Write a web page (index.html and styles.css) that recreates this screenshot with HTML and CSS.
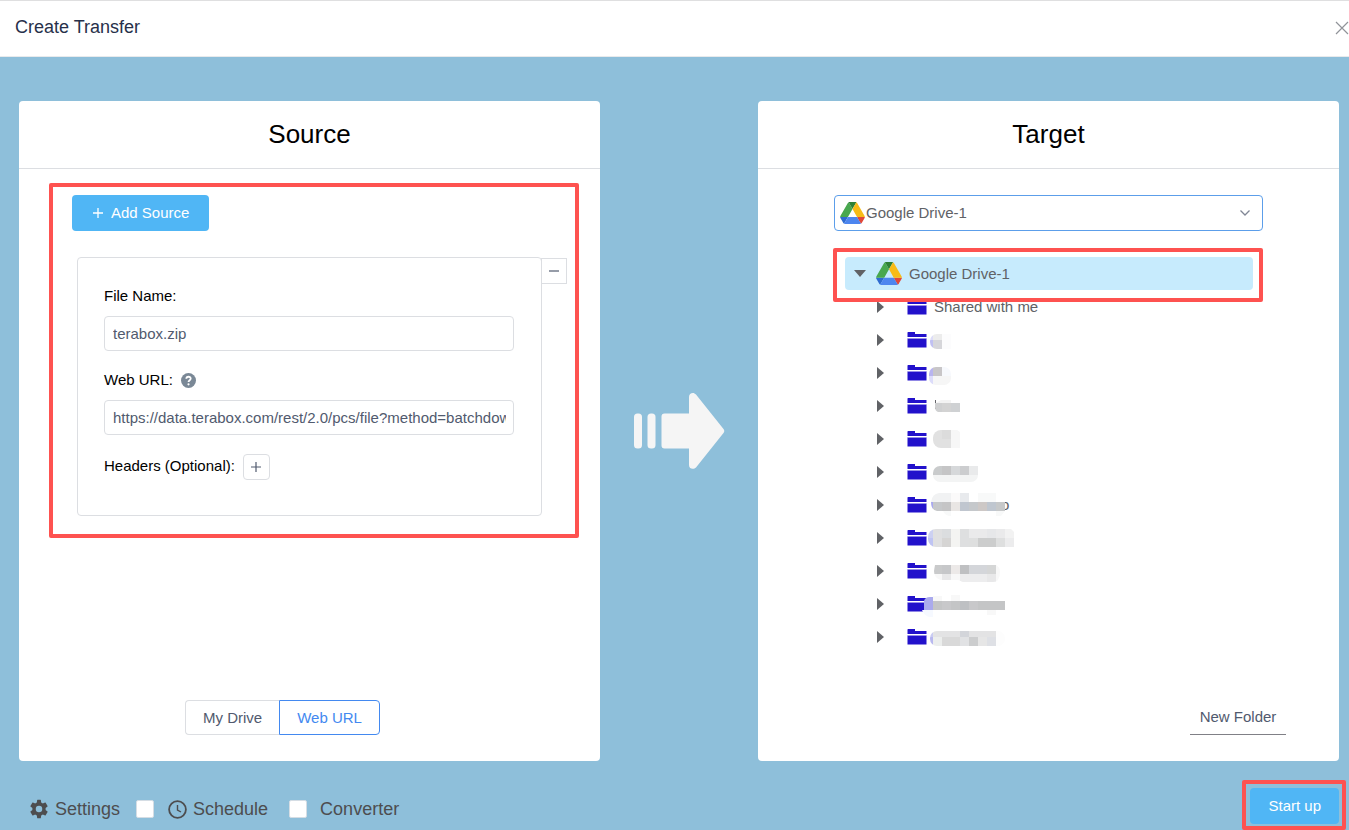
FILE: index.html
```html
<!DOCTYPE html>
<html lang="en">
<head>
<meta charset="utf-8">
<meta name="viewport" content="width=device-width, initial-scale=1">
<title>Create Transfer</title>
<link rel="stylesheet" href="styles.css">
</head>
<body>
<svg class="symbols" aria-hidden="true">
  <symbol id="drive" viewBox="0 0 87.3 78">
    <path fill="#2f6bd0" d="m6.6 66.85 3.85 6.65c.8 1.4 1.95 2.5 3.3 3.3l13.75-23.8h-27.5c0 1.55.4 3.1 1.2 4.5z"/>
    <path fill="#48a84f" d="m43.65 25-13.75-23.8c-1.35.8-2.5 1.9-3.3 3.3l-25.4 44a9.06 9.06 0 0 0-1.2 4.5h27.5z"/>
    <path fill="#e0483a" d="m73.55 76.8c1.35-.8 2.5-1.9 3.3-3.3l1.6-2.75 7.65-13.25c.8-1.4 1.2-2.95 1.2-4.5h-27.5l5.85 11.5z"/>
    <path fill="#2e8035" d="m43.65 25 13.75-23.8c-1.35-.8-2.9-1.2-4.5-1.2h-18.5c-1.6 0-3.15.45-4.5 1.2z"/>
    <path fill="#4d86ef" d="m59.8 53h-32.3l-13.75 23.8c1.35.8 2.9 1.2 4.5 1.2h50.8c1.6 0 3.15-.45 4.5-1.2z"/>
    <path fill="#f7bb18" d="m73.4 26.5-12.7-22c-.8-1.4-1.95-2.5-3.3-3.3l-13.75 23.8 16.15 28h27.45c0-1.55-.4-3.1-1.2-4.5z"/>
  </symbol>
  <symbol id="folder" viewBox="0 0 20 16">
    <path fill="#2211cb" d="M1 0H8V2H19.500V5H.5V.5zM.5 6.500H19.500V15.500H.5z"/>
    <path fill="#9c94ea" d="M.5 6h19v.6H.5z"/>
  </symbol>
  <symbol id="caret" viewBox="0 0 7 12"><path fill="#606266" d="M0 0 7 6 0 12z"/></symbol>
</svg>

<header class="header">
  <h1 class="header-title">Create Transfer</h1>
  <button class="close" aria-label="Close"><svg width="14" height="14" viewBox="0 0 14 14"><path d="M1 1 13 13M13 1 1 13" stroke="#909399" stroke-width="1.200" fill="none"/></svg></button>
</header>

<main class="main">
  <section class="panel">
    <h2 class="panel-title">Source</h2>
    <div class="marked">
      <button class="primary add"><svg width="10" height="10" viewBox="0 0 10 10"><path d="M5 0V10M0 5H10" stroke="#fff" stroke-width="1.300"/></svg>Add Source</button>
      <div class="card-row">
        <form class="card">
          <label class="label" for="file">File Name:</label>
          <input class="field" id="file" type="text" value="terabox.zip">
          <div class="label-row">
            <label class="label" for="url">Web URL:</label>
            <svg width="15" height="15" viewBox="0 0 15 15"><circle cx="7.500" cy="7.500" r="7.500" fill="#7a8896"/><path d="M5.300 5.800C5.400 3 9.800 3.100 9.700 5.700 9.600 7.200 7.600 7.200 7.500 9" fill="none" stroke="#fff" stroke-width="1.800"/><circle cx="7.500" cy="11.300" r="1.100" fill="#fff"/></svg>
          </div>
          <input class="field" id="url" type="text" value="https://data.terabox.com/rest/2.0/pcs/file?method=batchdownload">
          <div class="headers">
            <span>Headers (Optional):</span>
            <button class="small" type="button" aria-label="Add header"><svg width="10" height="10" viewBox="0 0 10 10"><path d="M5 0V10M0 5H10" stroke="#515a6e" stroke-width="1.200"/></svg></button>
          </div>
        </form>
        <button class="small remove" aria-label="Remove source"><svg width="10" height="10" viewBox="0 0 10 10"><path d="M0 5H10" stroke="#515a6e" stroke-width="1.200"/></svg></button>
      </div>
    </div>
    <div class="tabs">
      <button class="tab">My Drive</button>
      <button class="tab tab-active">Web URL</button>
    </div>
  </section>

  <div class="arrow">
    <svg width="92" height="78" viewBox="0 0 92 78" fill="#f5f5f5"><rect x="1" y="21.500" width="8" height="35" rx="3.500"/><rect x="14.500" y="21.500" width="8" height="35" rx="3.500"/><path d="M31.500 21.500H56V5C56 1 60.500-.5 63 2.500L90.500 37Q92 39 90.500 41L63 75.500C60.500 78 56 77 56 73V56.500H31.500Q28.500 56.500 28.500 53.500V24.500Q28.500 21.500 31.500 21.500z"/></svg>
  </div>

  <section class="panel">
    <h2 class="panel-title">Target</h2>
    <div class="target">
      <div class="select-box">
        <svg class="select-icon" width="25" height="22"><use href="#drive"/></svg>
        <select class="select" aria-label="Target drive"><option>Google Drive-1</option></select>
        <svg class="chevron" width="10" height="6" viewBox="0 0 10 6"><path d="M.5.5 5 5 9.500.5" fill="none" stroke="#808695" stroke-width="1.300"/></svg>
      </div>
      <div class="tree-root">
        <svg width="12" height="7" viewBox="0 0 12 7"><path fill="#606266" d="M0 0H12L6 7z"/></svg>
        <svg class="root-icon" width="26" height="23"><use href="#drive"/></svg>
        <span>Google Drive-1</span>
        <div class="root-mark"></div>
      </div>
      <ul class="tree">
        <li class="node"><svg class="caret"><use href="#caret"/></svg><svg class="folder"><use href="#folder"/></svg><span>Shared with me</span></li>
        <li class="node"><svg class="caret"><use href="#caret"/></svg><svg class="folder"><use href="#folder"/></svg>
          <svg class="mask" viewBox="0 0 100 33"><clipPath id="m1"><rect x="9" y="11" width="21" height="15" rx="7"/><path d="M18 11H30V26H18z"/></clipPath><g clip-path="url(#m1)"><path fill="#dcdcf8" d="M3 11h9v6H3z"/><path fill="#c0c0f2" d="M3 17h9v9H3z"/><path fill="#ececec" d="M12 11h9v6h-9z"/><path fill="#d6d6da" d="M12 17h9v9h-9z"/><path fill="#fcfcfd" d="M21 11h9v15h-9z"/></g></svg></li>
        <li class="node"><svg class="caret"><use href="#caret"/></svg><svg class="folder"><use href="#folder"/></svg>
          <svg class="mask" viewBox="0 0 100 33"><clipPath id="m2"><rect x="8" y="11" width="22" height="18" rx="7"/></clipPath><g clip-path="url(#m2)"><path fill="#b8b4f0" d="M3 11h9v9H3z"/><path fill="#dcdcfa" d="M3 20h9v9H3z"/><path fill="#c8c6c8" d="M12 11h9v9h-9z"/><path fill="#f6f6f6" d="M12 20h18v9H12z"/><path fill="#f7f9fd" d="M21 11h9v9h-9z"/></g></svg></li>
        <li class="node"><svg class="caret"><use href="#caret"/></svg><svg class="folder"><use href="#folder"/></svg>
          <svg class="mask" viewBox="0 0 100 33"><path fill="#66666a" d="M14 11h1v9h-1z"/><path fill="#f3f3f3" d="M15 14 20 11H30V14z"/><path fill="#cfd0d1" d="M14 14h7v9h-4q-3-1-3-5z"/><path fill="#d3d3d3" d="M21 14h9v9h-9z"/><path fill="#cfd1d3" d="M30 14h9v9h-9z"/></svg></li>
        <li class="node"><svg class="caret"><use href="#caret"/></svg><svg class="folder"><use href="#folder"/></svg>
          <svg class="mask" viewBox="0 0 100 33"><clipPath id="m4"><rect x="12" y="8" width="27" height="18" rx="8"/><path d="M22 8H36L39 10V26H22z"/></clipPath><g clip-path="url(#m4)"><path fill="#e1e1e1" d="M12 8h18v18H12z"/><path fill="#dcdcdc" d="M21 8h9v9h-9z"/><path fill="#f7f7f7" d="M30 8h9v18h-9z"/></g></svg></li>
        <li class="node"><svg class="caret"><use href="#caret"/></svg><svg class="folder"><use href="#folder"/></svg>
          <svg class="mask" viewBox="0 0 100 33"><clipPath id="m5"><rect x="12" y="11" width="45" height="16" rx="7"/><path d="M25 11H57V20H25z"/></clipPath><g clip-path="url(#m5)"><path fill="#f3f4f4" d="M12 20h45v7H12z"/><path fill="#c9cbcc" d="M12 11h9v9h-9z"/><path fill="#c5c5c6" d="M21 11h9v9h-9z"/><path fill="#d6d8da" d="M30 11h9v9h-9z"/><path fill="#cccdcf" d="M39 11h9v9h-9z"/><path fill="#e9eaeb" d="M48 11h9v9h-9z"/></g></svg></li>
        <li class="node"><svg class="caret"><use href="#caret"/></svg><svg class="folder"><use href="#folder"/></svg><span class="tail">o</span>
          <svg class="mask" viewBox="0 0 100 33"><clipPath id="m6"><path d="M18 5H84V23L80 28H75V23H30V28Q24 28 22 23H16Q10 22 10 14 11 6 18 5z"/></clipPath><g clip-path="url(#m6)"><path fill="#fff" d="M3 5h81v24H3z"/><path fill="#f1f2f3" d="M10 5h20v9H10z"/><path fill="#fbfafa" d="M30 5h9v9h-9z"/><path fill="#e8eaed" d="M39 5h9v9h-9z"/><path fill="#f8f9f9" d="M57 5h18v9H57zM21 23h9v5h-9zM75 23h9v5h-9z"/><path fill="#a9a9ee" d="M3 14h9v9H3z"/><path fill="#c6c8ca" d="M12 14h9v9h-9z"/><path fill="#c5c5c6" d="M21 14h9v9h-9z"/><path fill="#e9e6e4" d="M30 14h9v9h-9z"/><path fill="#c0c6cf" d="M39 14h9v9h-9z"/><path fill="#c5c8cb" d="M48 14h9v9h-9z"/><path fill="#cdc8c6" d="M57 14h9v9h-9z"/><path fill="#bfc6cf" d="M66 14h9v9h-9z"/><path fill="#c6c8c9" d="M75 14h9v9h-9z"/></g></svg></li>
        <li class="node"><svg class="caret"><use href="#caret"/></svg><svg class="folder"><use href="#folder"/></svg>
          <svg class="mask" viewBox="0 0 100 33"><clipPath id="m7"><rect x="7" y="8" width="86" height="18" rx="8"/><path d="M20 8H90L93 11V26H20z"/></clipPath><g clip-path="url(#m7)"><path fill="#ccd0f2" d="M3 8h9v9H3z"/><path fill="#bfc4f3" d="M3 17h9v9H3z"/><path fill="#e0e0e1" d="M12 8h9v18h-9z"/><path fill="#dbdddf" d="M21 8h9v9h-9z"/><path fill="#d6d5d4" d="M21 17h9v9h-9z"/><path fill="#f4f4f2" d="M30 8h9v18h-9z"/><path fill="#dedfe0" d="M39 8h9v18h-9z"/><path fill="#eaeaeb" d="M48 8h36v9H48z"/><path fill="#e6e7e9" d="M66 8h9v9h-9z"/><path fill="#dedfdf" d="M48 17h9v9h-9zM75 17h9v9h-9z"/><path fill="#cccdcd" d="M57 17h18v9H57z"/><path fill="#f2f2f2" d="M84 8h9v9h-9z"/><path fill="#ececed" d="M84 17h9v9h-9z"/></g></svg></li>
        <li class="node"><svg class="caret"><use href="#caret"/></svg><svg class="folder"><use href="#folder"/></svg>
          <svg class="mask" viewBox="0 0 100 33"><clipPath id="m8"><path d="M14 11H75Q79 13 79 18 79 28 72 28H42L37 26H20Q13 24 13 17z"/></clipPath><g clip-path="url(#m8)"><path fill="#f8f8f8" d="M12 11h67v17H12z"/><path fill="#c9cacb" d="M12 11h9v9h-9z"/><path fill="#c6c7c9" d="M21 11h9v9h-9z"/><path fill="#ece9e8" d="M30 11h9v9h-9z"/><path fill="#bfc0c2" d="M39 11h9v9h-9z"/><path fill="#d4d6da" d="M48 11h18v9H48z"/><path fill="#d5d6d6" d="M66 11h9v9h-9z"/><path fill="#e8e8e9" d="M21 20h9v6h-9zM66 20h9v8h-9z"/><path fill="#ededee" d="M39 20h27v8H39z"/></g></svg></li>
        <li class="node"><svg class="caret"><use href="#caret"/></svg><svg class="folder"><use href="#folder"/></svg>
          <svg class="mask" viewBox="0 0 100 33"><path fill="#aaaaed" d="M3 14Q4 10 9 10h3v13H3z"/><path fill="#f6f9ff" d="M1 23H12V30Q4 31 1 23z"/><path fill="#f8f8f8" d="M12 9h9v5h-9zM30 8h9v6h-9zM66 23h9v5h-9z"/><path fill="#c4c5c6" d="M12 14h72v9H12z"/><path fill="#bec0c3" d="M39 14h9v9h-9z"/><path fill="#c8c8ca" d="M48 14h9v9h-9zM21 14h9v9h-9z"/></svg></li>
        <li class="node"><svg class="caret"><use href="#caret"/></svg><svg class="folder"><use href="#folder"/></svg>
          <svg class="mask" viewBox="0 0 100 33"><clipPath id="m10"><rect x="9" y="11" width="75" height="15" rx="7"/></clipPath><g clip-path="url(#m10)"><path fill="#c9cbf2" d="M3 11h9v6H3z"/><path fill="#b8b8ef" d="M3 17h9v9H3z"/><path fill="#e3e3e4" d="M12 11h63v6H12z"/><path fill="#d3d5da" d="M39 11h9v6h-9z"/><path fill="#eceeed" d="M12 17h9v9h-9z"/><path fill="#d9d9d9" d="M21 17h18v9H21z"/><path fill="#e1e2e4" d="M39 17h9v9h-9z"/><path fill="#cccdce" d="M48 17h9v9h-9z"/><path fill="#e6e6e6" d="M57 17h9v9h-9z"/><path fill="#dee0e5" d="M66 17h9v9h-9z"/><path fill="#fdfdfd" d="M75 11h9v15h-9z"/></g></svg></li>
      </ul>
    </div>
    <button class="new-folder">New Folder</button>
  </section>
</main>

<footer class="footer">
  <div class="options">
    <button class="settings"><svg width="20" height="20" viewBox="0 0 24 24"><path fill="#4d4d4f" d="M19.900 13.200a8 8 0 0 0 0-2.400l2.300-1.700a.5.500 0 0 0 .1-.7l-2.300-4a.6.600 0 0 0-.7-.2l-2.700 1.100a8 8 0 0 0-2-1.200L14.200 1.300a.6.600 0 0 0-.6-.5h-3.200a.6.600 0 0 0-.6.500l-.4 2.800a8 8 0 0 0-2 1.200L4.700 4.200a.6.600 0 0 0-.7.200l-2.300 4a.5.500 0 0 0 .1.700l2.300 1.700a8 8 0 0 0 0 2.400l-2.300 1.700a.5.500 0 0 0-.1.700l2.300 4c.1.200.4.300.7.200l2.700-1.100a8 8 0 0 0 2 1.200l.4 2.800c0 .3.300.5.600.5h3.200c.3 0 .6-.2.600-.5l.4-2.800a8 8 0 0 0 2-1.200l2.700 1.100c.3.100.6 0 .7-.2l2.300-4a.5.500 0 0 0-.1-.7zM12 15.900a3.900 3.900 0 1 1 0-7.800 3.900 3.900 0 0 1 0 7.800z"/></svg>Settings</button>
    <input class="check" id="schedule" type="checkbox">
    <label class="option" for="schedule"><svg width="19" height="19" viewBox="0 0 19 19" fill="none" stroke="#4d4d4f"><circle cx="9.500" cy="9.500" r="8.400" stroke-width="1.800"/><path d="M9.500 5V10L13 12" stroke-width="1.400"/></svg>Schedule</label>
    <input class="check check-last" id="converter" type="checkbox">
    <label class="option option-last" for="converter">Converter</label>
  </div>
  <div class="start">
    <button class="primary">Start up</button>
    <div class="start-mark"></div>
  </div>
</footer>
</body>
</html>
```

FILE: styles.css
```css
* { box-sizing: border-box; }

body {
  margin: 0;
  min-height: 100vh;
  display: flex;
  flex-direction: column;
  background: #8ebfda;
  color: #000;
  font: 15px/20px "Liberation Sans", Arial, sans-serif;
}

button, input, select { font: inherit; color: inherit; margin: 0; }
button { cursor: pointer; }
svg { display: block; flex: none; }
.symbols { position: absolute; width: 0; height: 0; }

.header {
  display: flex;
  align-items: center;
  justify-content: space-between;
  height: 57px;
  padding: 0 0 3px 15px;
  background: #fff;
  border-top: 1px solid #dfdfe0;
  border-bottom: 1px solid #e8eaec;
}
.header-title { margin: 0; font-size: 18px; font-weight: 400; color: #27304a; }
.close { padding: 2px 0 0; border: 0; background: none; }

.main {
  flex: 1;
  display: grid;
  grid-template-columns: 1fr 158px 1fr;
  padding: 44px 10px 0 19px;
}
.panel {
  display: flex;
  flex-direction: column;
  min-width: 0;
  background: #fff;
  border-radius: 4px;
}
.panel-title {
  margin: 0;
  padding: 18px 0 19px;
  border-bottom: 1px solid #dcdee2;
  font-size: 26px;
  line-height: 30px;
  font-weight: 400;
  text-align: center;
}
.arrow { display: flex; align-items: center; justify-content: center; }

.primary {
  height: 36px;
  padding: 0 18px;
  border: 0;
  border-radius: 4px;
  background: #50b6f5;
  color: #fff;
}
.marked {
  margin: 14px 21px 0 30px;
  padding: 8px 8px 18px 19px;
  border: 4px solid #fe5250;
  border-radius: 2px;
}
.add { display: flex; align-items: center; gap: 8px; padding: 0 20px 0 21px; }

.card-row { display: flex; align-items: flex-start; margin: 26px 0 0 5px; }
.card {
  flex: 1;
  min-width: 0;
  padding: 28px 27px 35px 26px;
  border: 1px solid #dcdee2;
  border-radius: 4px;
}
.label { display: block; }
.label-row { display: flex; align-items: center; gap: 8px; margin-top: 19px; }
.field {
  display: block;
  width: 100%;
  height: 35px;
  margin-top: 10px;
  padding: 0 7px 0 8px;
  border: 1px solid #dcdee2;
  border-radius: 4px;
  background: #fff;
  color: #515a6e;
}
.headers { display: flex; gap: 8px; margin-top: 19px; line-height: 24px; }
.small {
  display: flex;
  align-items: center;
  justify-content: center;
  width: 27px;
  height: 26px;
  padding: 0;
  border: 1px solid #dcdee2;
  border-radius: 4px;
  background: #fff;
}
.remove { width: 26px; margin: 1px 0 0 -1px; border-radius: 0; }

.tabs { display: flex; margin: auto 0 26px 166px; }
.tab {
  height: 35px;
  padding: 0 17px;
  border: 1px solid #dcdee2;
  border-right: 0;
  border-radius: 4px 0 0 4px;
  background: #fff;
  color: #515a6e;
}
.tab-active { border: 1px solid #4389f0; border-radius: 0 4px 4px 0; color: #4389f0; }

.target { padding: 26px 76px 0; color: #606266; }
.select-box {
  display: flex;
  align-items: center;
  height: 36px;
  padding-left: 5px;
  border: 1px solid #5c9eea;
  border-radius: 4px;
}
.select {
  flex: 1;
  min-width: 0;
  padding: 0;
  border: 0;
  background: none;
  appearance: none;
}
.select-icon { margin-right: 1px; }
.chevron { margin-right: 12px; }
.tree-root {
  position: relative;
  display: flex;
  align-items: center;
  height: 33px;
  margin: 26px 10px 0 11px;
  padding-left: 9px;
  border-radius: 4px;
  background: #c7ebfd;
}
.root-icon { margin: 0 7px 0 10px; }
.root-mark {
  position: absolute;
  z-index: 1;
  inset: -9px -10px -12px -12px;
  border: 4px solid #fe5250;
  border-radius: 2px;
  pointer-events: none;
}
/* The highlight frame covers the top edge of the first node. */
.root-mark::after {
  content: "";
  position: absolute;
  inset: auto 0 0;
  height: 8px;
  background: #fff;
}
.tree { margin: 0; padding: 0 0 0 43px; list-style: none; }
.node { position: relative; display: flex; align-items: center; height: 33px; }
.caret { width: 7px; height: 12px; }
.folder { width: 20px; height: 16px; margin: 0 7px 0 23px; }
.mask { position: absolute; left: 44px; top: 0; width: 100px; height: 33px; }
.tail { padding-left: 67px; }

.new-folder {
  align-self: flex-end;
  width: 96px;
  height: 35px;
  margin: auto 53px 26px 0;
  padding: 0;
  border: 0;
  border-bottom: 1px solid #808086;
  background: none;
  color: #515a6e;
}

.footer {
  display: flex;
  align-items: flex-end;
  justify-content: space-between;
  padding: 27px 10px 6px 29px;
  color: #4d4d4f;
}
.options { display: flex; align-items: center; font-size: 18px; line-height: 30px; }
.settings { display: flex; align-items: center; gap: 6px; padding: 0; border: 0; background: none; }
.option { display: flex; align-items: center; gap: 6px; margin-left: 14px; }
.option-last { margin-left: 13px; }
.check {
  appearance: none;
  width: 18px;
  height: 18px;
  margin-left: 16px;
  border: 1px solid #d5dde4;
  border-radius: 2px;
  background: #fff;
}
.check-last { margin-left: 21px; }
.start { position: relative; }
.start-mark {
  position: absolute;
  inset: -8px -7px -6px -8px;
  border: 4px solid #fe5250;
  border-radius: 2px;
  pointer-events: none;
}
```
